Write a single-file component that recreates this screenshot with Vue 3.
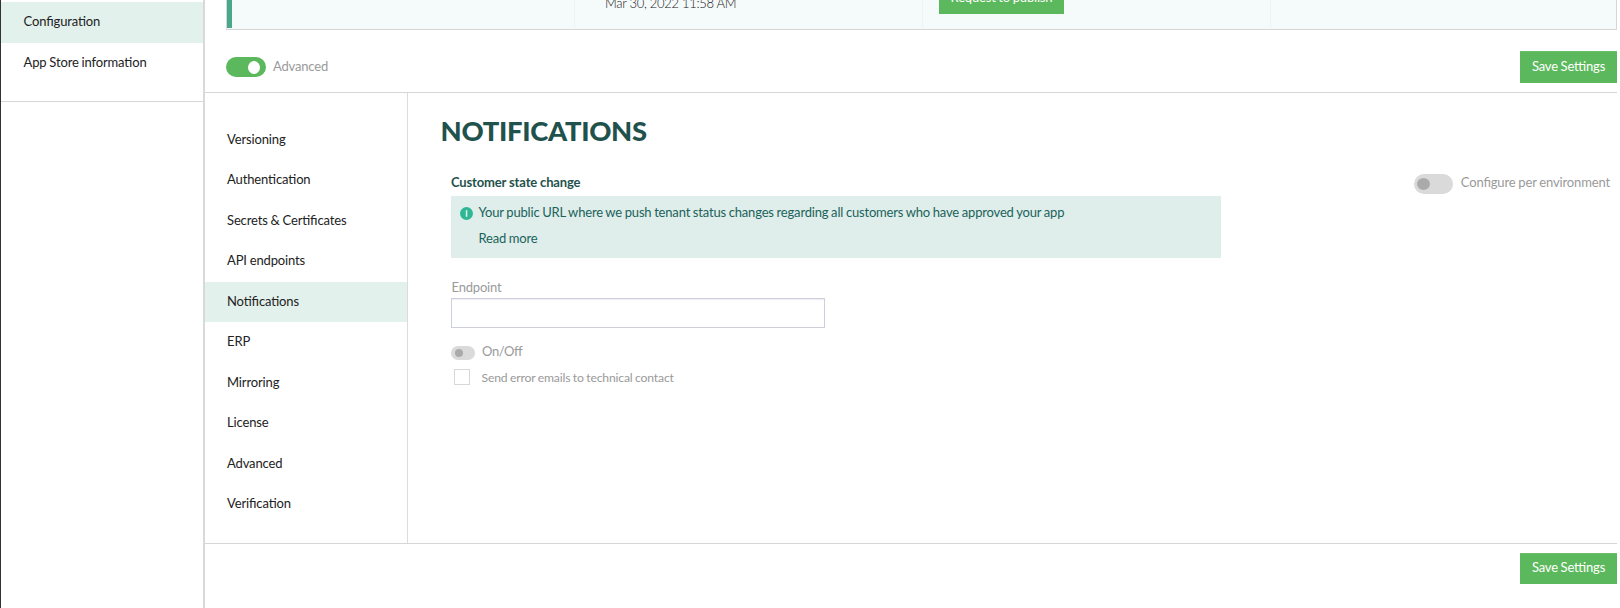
<script setup>
import { ref } from 'vue'

const sections = [
  'Versioning', 'Authentication', 'Secrets & Certificates', 'API endpoints', 'Notifications',
  'ERP', 'Mirroring', 'License', 'Advanced', 'Verification',
]
const active = ref('Notifications')
</script>

<template>
  <div class="page">
    <aside class="sidebar">
      <a class="side-item selected">Configuration</a>
      <a class="side-item">App Store information</a>
    </aside>
    <main class="main">
      <section class="env-row">
        <div class="cell first"></div>
        <div class="cell second"><span class="date">Mar 30, 2022 11:58 AM</span></div>
        <div class="cell third"><button class="btn publish">Request to publish</button></div>
        <div class="cell"></div>
      </section>
      <div class="toolbar">
        <span class="toggle on"><i></i></span>
        <span class="toolbar-label">Advanced</span>
        <button class="btn save">Save Settings</button>
      </div>
      <div class="body">
        <nav class="subnav">
          <a v-for="s in sections" :key="s" class="nav-item" :class="{ selected: s === active }" @click="active = s">{{ s }}</a>
        </nav>
        <div class="content">
          <h1>NOTIFICATIONS</h1>
          <div class="columns">
            <div class="form">
              <h2>Customer state change</h2>
              <div class="info">
                <svg class="info-icon" width="13" height="13" viewBox="0 0 13 13">
                  <circle cx="6.5" cy="6.5" r="6.5" fill="#2fb795" />
                  <rect x="5.8" y="3.2" width="1.5" height="6.6" fill="#dff3ec" />
                </svg>
                <div class="info-text">
                  <p>Your public URL where we push tenant status changes regarding all customers who have approved your app</p>
                  <a>Read more</a>
                </div>
              </div>
              <label class="field-label">Endpoint</label>
              <input class="field" type="text" />
              <div class="switch-row"><span class="toggle small"><i></i></span><span>On/Off</span></div>
              <div class="check-row"><span class="checkbox"></span><span>Send error emails to technical contact</span></div>
            </div>
            <div class="per-env"><span class="toggle"><i></i></span><span>Configure per environment</span></div>
          </div>
        </div>
      </div>
      <footer class="footer"><button class="btn save">Save Settings</button></footer>
    </main>
  </div>
</template>

<style>
body { background: #fff; overflow: hidden; }
</style>

<style scoped>
* { box-sizing: border-box; margin: 0; padding: 0; }
.page {
  display: flex; width: 1617px; height: 608px; overflow: hidden;
  border-left: 1px solid #333;
  font-family: Lato, "Liberation Sans", sans-serif; font-size: 13px; line-height: 20px; color: #222;
  letter-spacing: -0.18px; word-spacing: -0.4px; font-feature-settings: "liga" 1;
}
.sidebar { width: 202px; height: 102px; padding-top: 2px; border-bottom: 1px solid #d6d6d6; flex: none; letter-spacing: -0.13px; }
.side-item { display: block; height: 41px; padding-left: 22.5px; line-height: 39px; white-space: nowrap; }
.selected { background: #e3f1ec; }
.main { flex: 1; min-width: 0; height: 608px; border-left: 2px solid #d9d9d9; display: flex; flex-direction: column; }
.env-row {
  flex: none; display: grid; grid-template-columns: 348px 348px 348px 1fr; height: 30px; margin-left: 21px;
  border: 1px solid #d6d6d6; border-top: 0; background: #f5fafa; overflow: hidden;
}
.cell { height: 28px; border-right: 1px solid #eff3f3; }
.cell:last-child { border-right: 0; }
.first { border-left: 5px solid #4aa88a; }
.second { padding-left: 30px; }
.date { display: block; margin-top: -7px; font-weight: 300; white-space: nowrap; letter-spacing: -0.3px; word-spacing: 0; }
.third { padding-left: 16px; }
.btn {
  display: block; border: 0; background: #5cb85c; color: #fff; font: inherit; text-align: center; white-space: nowrap;
  letter-spacing: inherit; word-spacing: inherit; font-feature-settings: inherit;
  box-shadow: inset 0 1px #6bbf6b;
}
.publish { width: 125px; height: 32px; margin-top: -18px; line-height: 30px; padding-bottom: 2px; }
.save { width: 97px; height: 32px; margin-left: auto; line-height: 28px; padding-bottom: 2px; }
.toolbar { flex: none; display: flex; align-items: flex-start; height: 63px; padding: 21px 0 0 21px; border-bottom: 1px solid #d6d6d6; }
.toggle { flex: none; display: block; width: 39px; height: 20px; padding: 4px 3px; border-radius: 10px; background: #dadada; }
.toggle i { display: block; width: 13px; height: 12px; border-radius: 50%; background: #aaa; }
.toggle.on { width: 40px; margin-top: 6px; background: #5cb85c; }
.toggle.on i { width: 12px; height: 13px; margin-left: 19px; background: #fff; }
.toggle.small { width: 24px; height: 14px; padding: 3px 4px; margin-top: 5px; }
.toggle.small i { width: 8px; height: 8px; }
.toolbar-label { margin: 5px 0 0 7px; color: #9a9a9a; }
.body { flex: none; display: flex; height: 451px; border-bottom: 1px solid #d6d6d6; }
.subnav { flex: none; width: 203px; padding-top: 26.8px; border-right: 1px solid #dcdcdc; letter-spacing: -0.13px; }
.nav-item { display: block; height: 40.5px; padding-left: 22px; line-height: 38px; }
.content { flex: 1; padding-left: 32.5px; }
h1 { margin-top: 20px; font-size: 27.4px; line-height: 35px; height: 36px; font-weight: 900; letter-spacing: -0.3px; color: #1f524c; }
.columns { display: flex; justify-content: space-between; padding: 23px 7px 0 10.5px; }
.form { width: 770px; }
h2 { height: 24px; font-size: 13px; line-height: 21px; font-weight: 700; letter-spacing: -0.15px; word-spacing: 0; color: #1f524c; }
.info { display: flex; height: 62px; padding: 6px 0 0 9px; background: #dfeeea; color: #1b625b; }
.info-icon { display: block; margin-top: 5px; }
.info-text { margin-left: 5.5px; }
.info-text a { display: block; margin-top: 6px; }
.field-label { display: block; margin-top: 19px; height: 21px; padding-left: 0.5px; color: #9a9a9a; }
.field { display: block; width: 374px; height: 30px; border: 1px solid #cdd0db; box-shadow: inset 0 1px 1px #eeeef4; }
.switch-row, .check-row, .per-env { display: flex; color: #9a9a9a; white-space: nowrap; }
.switch-row { margin-top: 13px; gap: 7px; letter-spacing: -0.4px; }
.check-row { margin-top: 6px; gap: 11.5px; font-size: 12.2px; line-height: 22px; }
.checkbox { width: 16px; height: 16px; margin: 2px 0 0 3px; border: 1px solid #d8d8d8; }
.per-env { gap: 8px; letter-spacing: -0.14px; }
.per-env .toggle { margin-top: 2px; }
.footer { padding-top: 9px; }
.footer .save { height: 31px; line-height: 27px; }
</style>
